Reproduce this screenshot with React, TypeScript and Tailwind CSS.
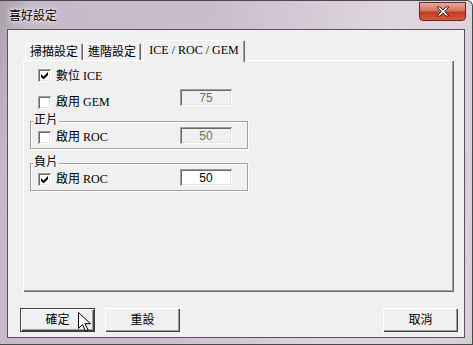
import type { ReactNode } from 'react'

const FONT = '"Liberation Serif", "Noto Sans CJK TC", serif'

function Check({ checked }: { checked: boolean }) {
  return (
    <span className="flex h-[13px] w-[13px] shrink-0 items-center justify-center bg-white shadow-[inset_1px_1px_0_#a0a0a0,inset_-1px_-1px_0_#fff,inset_2px_2px_0_#696969,inset_-2px_-2px_0_#e3e3e3]">
      {checked && (
        <svg width="7" height="7" viewBox="0 0 7 7">
          <path d="M0 2v3l2 2h1l4-4V0L2.5 4.5z" fill="#000" />
        </svg>
      )}
    </span>
  )
}

function Field({ value, disabled }: { value: string; disabled?: boolean }) {
  return (
    <div
      className={`flex h-[17px] w-[52px] items-center justify-center pt-[1px] font-['Liberation_Sans',sans-serif] text-[12px] shadow-[inset_1px_1px_0_#a0a0a0,inset_-1px_-1px_0_#fff,inset_2px_2px_0_#696969,inset_-2px_-2px_0_#e3e3e3] ${
        disabled ? 'bg-[#f0f0f0] text-[#6d6d6d]' : 'bg-white text-black'
      }`}
    >
      {value}
    </div>
  )
}

function Option({ label, checked }: { label: string; checked: boolean }) {
  return (
    <div className="flex w-[142px] items-center">
      <Check checked={checked} />
      <span className="ml-[5px]">{label}</span>
    </div>
  )
}

function Group({ title, children }: { title: string; children: ReactNode }) {
  return (
    <div className="relative ml-[7px] h-[28px] w-[218px] border border-[#a0a0a0] shadow-[inset_1px_1px_0_#fff,1px_1px_0_#fff]">
      <span className="absolute left-[2px] top-[-9px] bg-[#f0f0f0] px-[1px] text-[12px] leading-[14px]">{title}</span>
      {children}
    </div>
  )
}

function Button({ label, def, children }: { label: string; def?: boolean; children?: ReactNode }) {
  return (
    <div
      className={`relative flex h-[24px] w-[75px] items-center justify-center text-[12px] ${
        def
          ? 'border border-[#404040] shadow-[inset_1px_1px_0_#fff,inset_-1px_-1px_0_#404040,inset_-2px_-2px_0_#a0a0a0]'
          : 'shadow-[inset_1px_1px_0_#fff,inset_-1px_-1px_0_#404040,inset_-2px_-2px_0_#a0a0a0]'
      }`}
    >
      {label}
      {children}
    </div>
  )
}

function Tab({ label, w, active }: { label: string; w: string; active?: boolean }) {
  return (
    <div
      className={`flex items-center justify-center text-[12px] rounded-t-[2px] ${w} ${
        active
          ? 'relative z-10 mb-[-2px] h-[22px] bg-[#f0f0f0] pb-[2px] shadow-[inset_1px_1px_0_#fff,inset_-1px_0_0_#696969,inset_-2px_0_0_#a0a0a0]'
          : 'h-[17px] shadow-[inset_1px_1px_0_#fff,inset_-1px_0_0_#696969,inset_-2px_0_0_#a0a0a0]'
      }`}
    >
      {label}
    </div>
  )
}

export default function App() {
  return (
    <div
      className="relative flex h-[345px] w-[473px] flex-col overflow-hidden rounded-tr-[6px] border-r border-b border-t border-[#4a4a4a] bg-[linear-gradient(100deg,#a9a0ac_0%,#c6b8c9_6%,#cbbccd_40%,#e0d6e1_75%,#d9cddb_100%)] text-black"
      style={{ fontFamily: FONT }}
    >
      <div className="flex h-[28px] shrink-0 items-start">
        <span className="pl-[9px] pt-[7px] font-['Noto_Sans_CJK_TC',sans-serif] text-[12px] leading-[14px] [text-shadow:0_0_6px_#fff,0_0_3px_#fff]">
          喜好設定
        </span>
        <div className="ml-auto mr-[6px] mt-[1px] flex h-[19px] w-[47px] items-center justify-center rounded-b-[4px] border border-[#5a2a24] bg-[linear-gradient(#e8a89c_0%,#d87060_45%,#c43b22_55%,#d45a3c_100%)]">
          <svg width="14" height="11" viewBox="0 0 14 11">
            <path d="M1 1h3l3 3l3-3h3l-4.5 4.5L13 10h-3L7 7l-3 3H1l4.5-4.5z" fill="#fff" stroke="#3a2a2a" strokeWidth="1" />
          </svg>
        </div>
      </div>
      <div className="ml-[7px] mr-[7px] flex h-[309px] flex-col border border-[#555] bg-[#f0f0f0]">
        <div className="pl-[15px] pt-[10px]">
          <div className="flex h-[20px] items-end pl-[2px]">
            <Tab label="掃描設定" w="w-[58px]" />
            <Tab label="進階設定" w="w-[58px]" />
            <div className="w-[2px]" />
            <Tab label="ICE / ROC / GEM" w="w-[102px]" active />
          </div>
          <div className="flex h-[232px] w-[431px] flex-col shadow-[inset_1px_1px_0_#fff,inset_-1px_-1px_0_#696969,inset_-2px_-2px_0_#a0a0a0]">
            <div className="mt-[9px] flex h-[13px] items-center pl-[15px] text-[12px]">
              <Option label="數位 ICE" checked />
            </div>
            <div className="mt-[7px] flex h-[17px] items-start pl-[15px] text-[12px]">
              <div className="mt-[4px]">
                <Option label="啟用 GEM" checked={false} />
              </div>
              <Field value="75" disabled />
            </div>
            <div className="mt-[15px]">
              <Group title="正片">
                <div className="flex items-start pl-[7px] pt-[5px] text-[12px]">
                  <div className="mt-[1px]">
                    <Option label="啟用 ROC" checked={false} />
                  </div>
                  <Field value="50" disabled />
                </div>
              </Group>
            </div>
            <div className="mt-[14px]">
              <Group title="負片">
                <div className="flex items-start pl-[7px] pt-[5px] text-[12px]">
                  <div className="mt-[1px]">
                    <Option label="啟用 ROC" checked />
                  </div>
                  <Field value="50" />
                </div>
              </Group>
            </div>
          </div>
        </div>
        <div className="mt-[16px] flex pl-[12px] pr-[6px]">
          <Button label="確定" def>
            <svg className="absolute left-[57px] top-[3px]" width="13" height="20" viewBox="0 0 13 20">
              <path d="M0.5 0.5v16l4-4l3 6.5l2.5-1l-3-6.3h5.5z" fill="#fff" stroke="#000" strokeWidth="1" />
            </svg>
          </Button>
          <div className="ml-[10px]">
            <Button label="重設" />
          </div>
          <div className="ml-auto">
            <Button label="取消" />
          </div>
        </div>
      </div>
    </div>
  )
}
